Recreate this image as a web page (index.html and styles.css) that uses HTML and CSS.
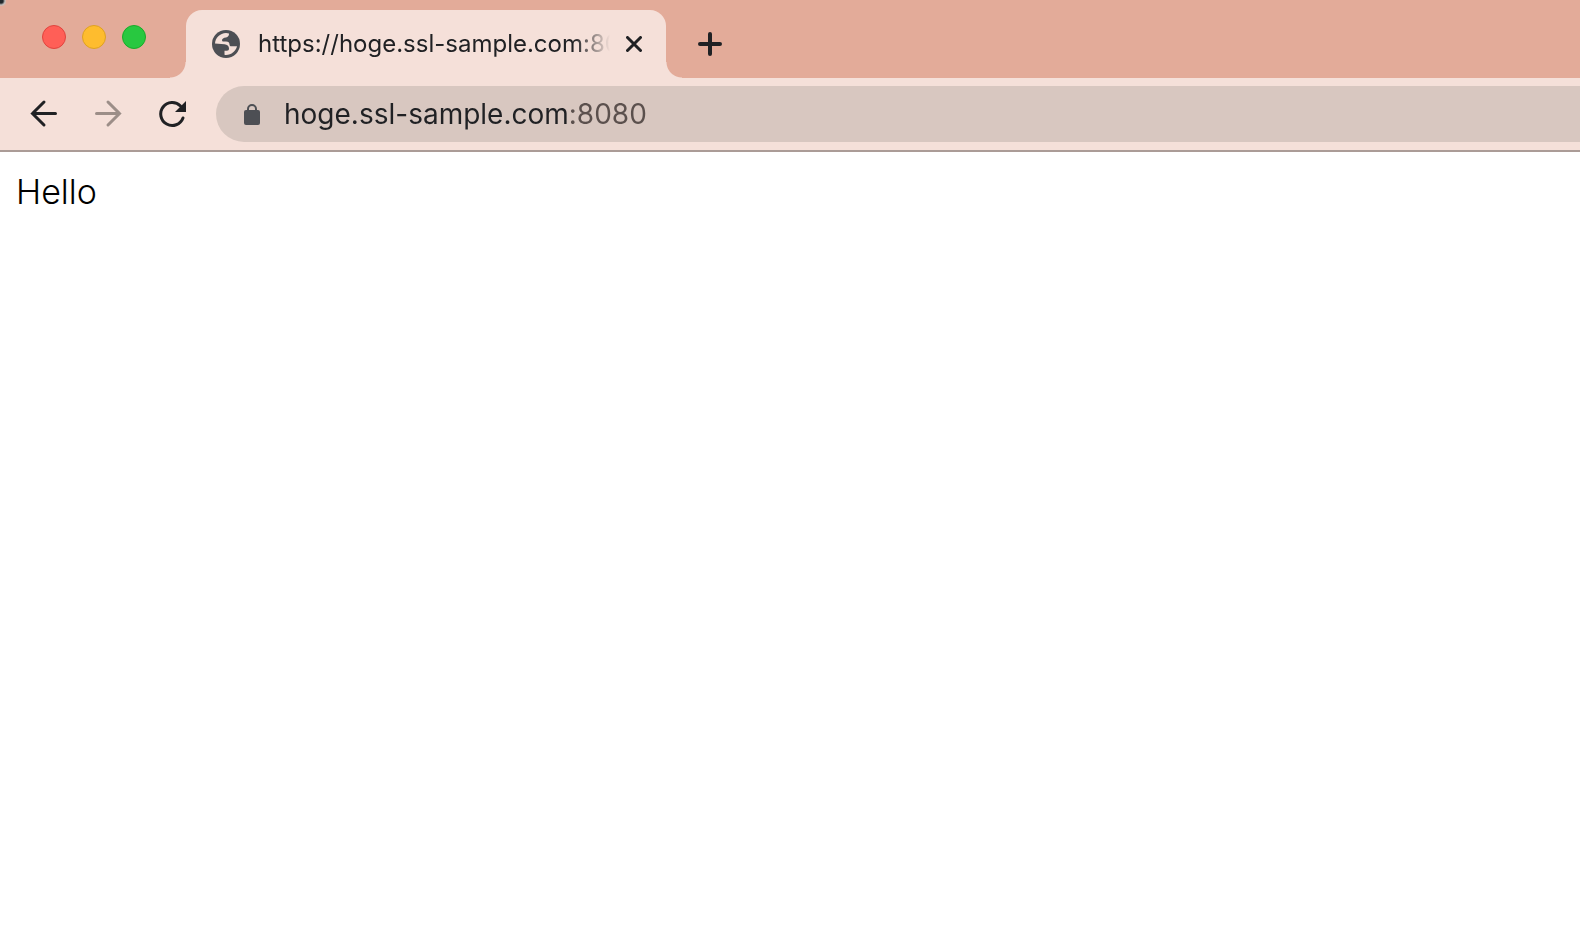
FILE: index.html
```
<!DOCTYPE html>
<html lang="en">
<head>
    <meta charset="UTF-8">
    <meta name="viewport" content="width=device-width, initial-scale=1.0">
    <title>https://hoge.ssl-sample.com:8080</title>
    <link rel="stylesheet" href="styles.css">
</head>
<body>
    <header class="browser">
        <div class="tab-strip">
            <div class="window-controls">
                <button type="button" class="light light-close" aria-label="Close window"></button>
                <button type="button" class="light light-minimize" aria-label="Minimize window"></button>
                <button type="button" class="light light-zoom" aria-label="Zoom window"></button>
            </div>

            <div class="tab">
                <svg class="favicon" viewBox="0 0 28 28" aria-hidden="true">
                    <circle cx="14" cy="14" r="14" fill="#4d4f54"/>
                    <path d="M3 13.500C3.200 8 8 3.200 14 3c1.200 0 2.200.2 3 .5.2 2-1 3.500-3 4-2.500.3-4 1.200-4 2.700 0 .8.700 1.300 1.500 1.300h2.500c2.500 0 3.500 1.200 3.500 3 0 1.300.8 1.800 2 1.800H25C24 21 19.500 25 14 25c-.6 0-1-.1-1.500-.2v-4h2.500c1.300 0 2-1 2-2.300 0-2.500-1.800-4-4.500-4.300z" fill="#f5e0d9"/>
                </svg>
                <span class="tab-title">https://hoge.ssl-sample.com:8080</span>
                <button type="button" class="tab-close" aria-label="Close tab">
                    <svg width="16" height="16" viewBox="0 0 16 16"><path d="M1.500 1.500l13 13M14.500 1.500l-13 13"/></svg>
                </button>
            </div>

            <button type="button" class="new-tab" aria-label="New tab">
                <svg width="24" height="24" viewBox="0 0 24 24"><path d="M12 2v20M2 12h20"/></svg>
            </button>
        </div>

        <div class="toolbar">
            <button type="button" class="nav-btn" aria-label="Back">
                <svg width="32" height="32" viewBox="0 0 32 32"><path d="M27.500 15.500H4.500M16 4L4.500 15.500 16 27"/></svg>
            </button>
            <button type="button" class="nav-btn nav-forward" aria-label="Forward" disabled>
                <svg width="32" height="32" viewBox="0 0 32 32"><path d="M4.500 15.500h23M16 4l11.500 11.500L16 27"/></svg>
            </button>
            <button type="button" class="nav-btn" aria-label="Reload">
                <svg width="32" height="32" viewBox="0 0 32 32">
                    <path d="M27 20A11.500 11.500 0 1 1 24.500 8"/>
                    <path class="solid" d="M30 3v11H19z"/>
                </svg>
            </button>

            <label class="address-bar">
                <svg class="lock" width="16" height="22" viewBox="0 0 16 22" aria-hidden="true">
                    <rect x="0" y="7" width="16" height="15" rx="2" fill="#4d4f54"/>
                    <path d="M4 8V6a4 4 0 0 1 8 0v2" fill="none" stroke="#4d4f54" stroke-width="2"/>
                </svg>
                <input type="text" class="address" value="hoge.ssl-sample.com:8080" aria-label="Address" spellcheck="false">
            </label>
        </div>
    </header>

    <main class="page">Hello</main>
</body>
</html>
```
FILE: styles.css
```
* {
    margin: 0;
    padding: 0;
    box-sizing: border-box;
}

body {
    font-family: Inter, 'Liberation Sans', sans-serif;
    background: white;
    color: #000;
}

/* rounded window corner with the desktop behind it */
body::before {
    content: '';
    position: absolute;
    top: 0;
    left: 0;
    width: 6px;
    height: 6px;
    background: radial-gradient(circle at 1px 1px, #20282c 2px, #c4c0bd 4px, transparent 6px);
}

button {
    border: none;
    background: none;
    cursor: pointer;
}

svg {
    display: block;
}

button svg {
    fill: none;
    stroke: #202124;
    stroke-width: 3;
    stroke-linecap: round;
}

.tab-strip {
    display: flex;
    height: 78px;
    padding: 10px 0 0 42px;
    background: #e3ab99;
}

.window-controls {
    display: flex;
    gap: 16px;
    width: 144px;
    padding-top: 15px;
}

.light {
    width: 24px;
    height: 24px;
    border-radius: 50%;
    border: 1px solid;
}

.light-close {
    background: #ff5f57;
    border-color: #e0443e;
}

.light-minimize {
    background: #febc2e;
    border-color: #dea123;
}

.light-zoom {
    background: #28c840;
    border-color: #1aab29;
}

.tab {
    position: relative;
    display: flex;
    align-items: center;
    width: 480px;
    padding: 0 16px 0 26px;
    background: #f5e0d9;
    border-radius: 16px 16px 0 0;
}

/* curved feet on both sides of the tab */
.tab::before,
.tab::after {
    content: '';
    position: absolute;
    bottom: 0;
    width: 16px;
    height: 16px;
}

.tab::before {
    right: 100%;
    background: radial-gradient(circle at 0 0, transparent 15px, #f5e0d9 16px);
}

.tab::after {
    left: 100%;
    background: radial-gradient(circle at 100% 0, transparent 15px, #f5e0d9 16px);
}

.favicon {
    flex: none;
    width: 28px;
    height: 28px;
    margin-right: 18px;
}

.tab-title {
    flex: 1;
    overflow: hidden;
    white-space: nowrap;
    font-size: 24px;
    line-height: 28px;
    color: #202124;
    mask-image: linear-gradient(to right, #000 calc(100% - 36px), transparent);
}

.tab-close {
    padding: 8px;
    margin-left: 8px;
}

.new-tab {
    padding: 0 32px;
}

.new-tab svg {
    stroke-width: 4;
}

.toolbar {
    display: flex;
    align-items: center;
    gap: 32px;
    padding: 8px 0 8px 28px;
    background: #f5e0d9;
    border-bottom: 2px solid #ab9c97;
}

.nav-forward svg {
    stroke: #9c8e88;
}

button .solid {
    fill: #202124;
    stroke: none;
}

.address-bar {
    flex: 1;
    display: flex;
    align-items: center;
    gap: 24px;
    height: 56px;
    margin-left: -4px;
    padding-left: 28px;
    background: #d8c7c0;
    border-radius: 28px 0 0 28px;
}

.address {
    flex: 1;
    border: none;
    outline: none;
    font: 28px Inter, 'Liberation Sans', sans-serif;
    /* host is dark, the port is dimmed */
    background: linear-gradient(to right, #202124 284px, #5b504d 284px);
    background-clip: text;
    -webkit-text-fill-color: transparent;
}

.page {
    padding: 18px 16px;
    font-size: 34px;
    font-weight: 300;
    line-height: 44px;
}
```
